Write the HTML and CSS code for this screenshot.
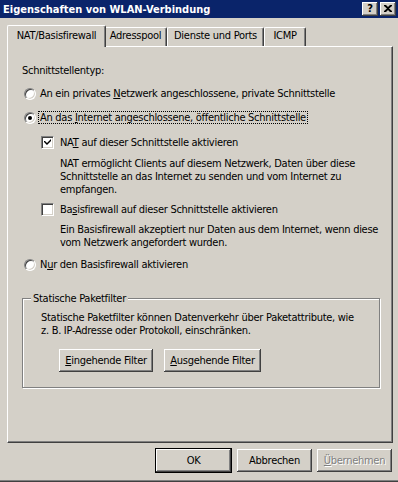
FILE: index.html
```html
<!DOCTYPE html>
<html lang="de">
<head>
<meta charset="utf-8">
<title>Eigenschaften von WLAN-Verbindung</title>
<link rel="stylesheet" href="styles.css">
</head>
<body>
<div class="window">
  <div class="titlebar">
    <span class="title">Eigenschaften von WLAN-Verbindung</span>
    <div class="tbtns">
      <span class="tbtn help">?</span>
      <span class="tbtn close"><svg width="8" height="7" viewBox="0 0 8 7"><path d="M0 0h2l2 2 2-2h2v1l-3 2.5 3 2.5v1h-2l-2-2-2 2h-2v-1l3-2.5-3-2.5z" fill="#000"/></svg></span>
    </div>
  </div>

  <div class="tabs">
    <div class="tab active t1">NAT/Basisfirewall</div>
    <div class="tab t2">Adresspool</div>
    <div class="tab t3">Dienste und Ports</div>
    <div class="tab t4">ICMP</div>
  </div>

  <div class="panel">
    <div class="line heading">Schnittstellentyp:</div>

    <div class="opt r1"><span class="radio"></span><span class="lbl">An ein privates <u>N</u>etzwerk angeschlossene, private Schnittstelle</span></div>
    <div class="opt r2"><span class="radio checked"><span class="dot"></span></span><span class="lbl focus">An das <u>I</u>nternet angeschlossene, öffentliche Schnittstelle</span></div>

    <div class="opt c1"><span class="check"><svg width="7" height="7" viewBox="0 0 7 7"><path d="M0 2h1l2 2 4-4v2l-4 4h-0l-3-3z" fill="#000"/></svg></span><span class="lbl">NA<u>T</u> auf dieser Schnittstelle aktivieren</span></div>
    <div class="desc d1">NAT ermöglicht Clients auf diesem Netzwerk, Daten über diese<br>Schnittstelle an das Internet zu senden und vom Internet zu<br>empfangen.</div>

    <div class="opt c2"><span class="check"></span><span class="lbl">Ba<u>s</u>isfirewall auf dieser Schnittstelle aktivieren</span></div>
    <div class="desc d2">Ein Basisfirewall akzeptiert nur Daten aus dem Internet, wenn diese<br>vom Netzwerk angefordert wurden.</div>

    <div class="opt r3"><span class="radio"></span><span class="lbl">N<u>u</u>r den Basisfirewall aktivieren</span></div>

    <div class="group">
      <span class="legend">Statische Paketfilter</span>
      <div class="gtext">Statische Paketfilter können Datenverkehr über Paketattribute, wie<br>z. B. IP-Adresse oder Protokoll, einschränken.</div>
      <div class="gbtns">
        <div class="btn b-in"><u>E</u>ingehende Filter</div>
        <div class="btn b-out"><u>A</u>usgehende Filter</div>
      </div>
    </div>
  </div>

  <div class="footer">
    <div class="btn default">OK</div>
    <div class="btn">Abbrechen</div>
    <div class="btn disabled"><u>Ü</u>bernehmen</div>
  </div>
</div>
</body>
</html>
```

FILE: styles.css
```css
* { box-sizing: border-box; }
html, body { margin: 0; padding: 0; }
body {
  width: 398px;
  height: 482px;
  overflow: hidden;
  background: #d4d0c8;
  font-family: "DejaVu Sans Condensed", "Liberation Sans", Arial, sans-serif;
  font-size: 11px;
  letter-spacing: -0.28px;
  color: #000;
}
u { text-decoration: underline; text-underline-offset: 1px; }

.window {
  width: 398px;
  height: 482px;
  display: flex;
  flex-direction: column;
  background: #d4d0c8;
  border-bottom: 1px solid #404040;
  box-shadow: inset 0 -1px 0 #808080;
}

.titlebar {
  height: 18px;
  flex: none;
  background: #0a246a;
  display: flex;
  align-items: center;
  justify-content: space-between;
  padding: 0 2px 0 3px;
}
.title { color: #fff; font-weight: bold; font-size: 11px; line-height: 13px; letter-spacing: 0; }
.tbtns { display: flex; gap: 2px; }
.tbtn {
  width: 16px;
  height: 14px;
  background: #d4d0c8;
  box-shadow: inset -1px -1px 0 #404040, inset 1px 1px 0 #fff, inset -2px -2px 0 #808080;
  display: flex;
  align-items: center;
  justify-content: center;
}
.tbtn.help { font-weight: bold; font-size: 11px; line-height: 11px; padding-bottom: 1px; letter-spacing: 0; }
.tbtn.close svg { display: block; margin-top: -1px; }

.tabs {
  flex: none;
  display: flex;
  align-items: flex-end;
  height: 21px;
  margin: 7px 0 0 7px;
  position: relative;
  z-index: 1;
}
.tab {
  height: 19px;
  line-height: 16px;
  text-align: center;
  background: #d4d0c8;
  border-top: 1px solid #fff;
  border-left: 1px solid #fff;
  border-right: 1px solid #404040;
  box-shadow: inset -1px 0 0 #808080;
  border-radius: 2px 2px 0 0;
  white-space: nowrap;
}
.tab.active {
  height: 22px;
  margin-bottom: -1px;
  line-height: 19px;
  position: relative;
  z-index: 2;
  margin-right: -2px;
}
.t1 { width: 99px; }
.t2 { width: 63px; }
.t3 { width: 97px; }
.t4 { width: 42px; }

.panel {
  flex: none;
  height: 397px;
  margin: 0 5px 0 7px;
  border-top: 1px solid #fff;
  border-left: 1px solid #fff;
  border-right: 1px solid #404040;
  border-bottom: 1px solid #404040;
  box-shadow: inset -1px -1px 0 #808080;
  padding: 0 12px 0 14px;
  display: flex;
  flex-direction: column;
}
.line { line-height: 13px; }
.heading { margin-top: 17px; }

.opt {
  display: flex;
  align-items: center;
  height: 13px;
  line-height: 13px;
  white-space: nowrap;
}
.r1 { margin-top: 10px; }
.r2 { margin-top: 11px; }
.c1 { margin-top: 12px; margin-left: 19px; }
.c2 { margin-top: 7px; margin-left: 19px; }
.r3 { margin-top: 9px; }

.radio {
  flex: none;
  width: 12px;
  height: 12px;
  margin-left: 2px;
  margin-right: 4px;
  border-radius: 50%;
  background: #fff;
  border: 1px solid;
  border-color: #808080 #fff #fff #808080;
  box-shadow: inset 1px 1px 0 #404040, inset -1px -1px 0 #d4d0c8;
  display: flex;
  align-items: center;
  justify-content: center;
}
.dot { width: 4px; height: 4px; border-radius: 50%; background: #000; }

.check {
  flex: none;
  width: 13px;
  height: 13px;
  margin-right: 6px;
  background: #fff;
  border: 1px solid;
  border-color: #808080 #fff #fff #808080;
  box-shadow: inset 1px 1px 0 #404040, inset -1px -1px 0 #d4d0c8;
  display: flex;
  align-items: center;
  justify-content: center;
}
.check svg { display: block; }

.lbl { line-height: 13px; }
.focus {
  border: 1px dotted #000;
  line-height: 11px;
  padding: 0 1px;
  margin-left: -2px;
}

.desc { line-height: 13px; margin-left: 38px; white-space: nowrap; }
.d1 { margin-top: 8px; }
.d2 { margin-top: 7px; }

.group {
  position: relative;
  margin-top: 27px;
  height: 90px;
  border: 1px solid #808080;
  box-shadow: 1px 1px 0 #fff, inset 1px 1px 0 #fff;
  padding: 12px 0 0 18px;
}
.legend {
  position: absolute;
  left: 8px;
  top: -7px;
  padding: 0 2px;
  background: #d4d0c8;
  line-height: 13px;
  white-space: nowrap;
}
.gtext { line-height: 13px; white-space: nowrap; }
.gbtns { display: flex; gap: 11px; margin-top: 12px; margin-left: 18px; }

.btn {
  height: 23px;
  width: 75px;
  background: #d4d0c8;
  box-shadow: inset -1px -1px 0 #404040, inset 1px 1px 0 #fff, inset -2px -2px 0 #808080;
  display: flex;
  align-items: center;
  justify-content: center;
  white-space: nowrap;
  padding-bottom: 1px;
}
.b-in { width: 94px; }
.b-out { width: 97px; }

.footer {
  flex: none;
  display: flex;
  justify-content: flex-end;
  align-items: center;
  gap: 5px;
  height: 25px;
  margin-top: 5px;
  padding-right: 6px;
}
.btn.default {
  width: 77px;
  height: 25px;
  border: 1px solid #000;
}
.btn.disabled { color: #808080; text-shadow: 1px 1px 0 #fff; }
```
